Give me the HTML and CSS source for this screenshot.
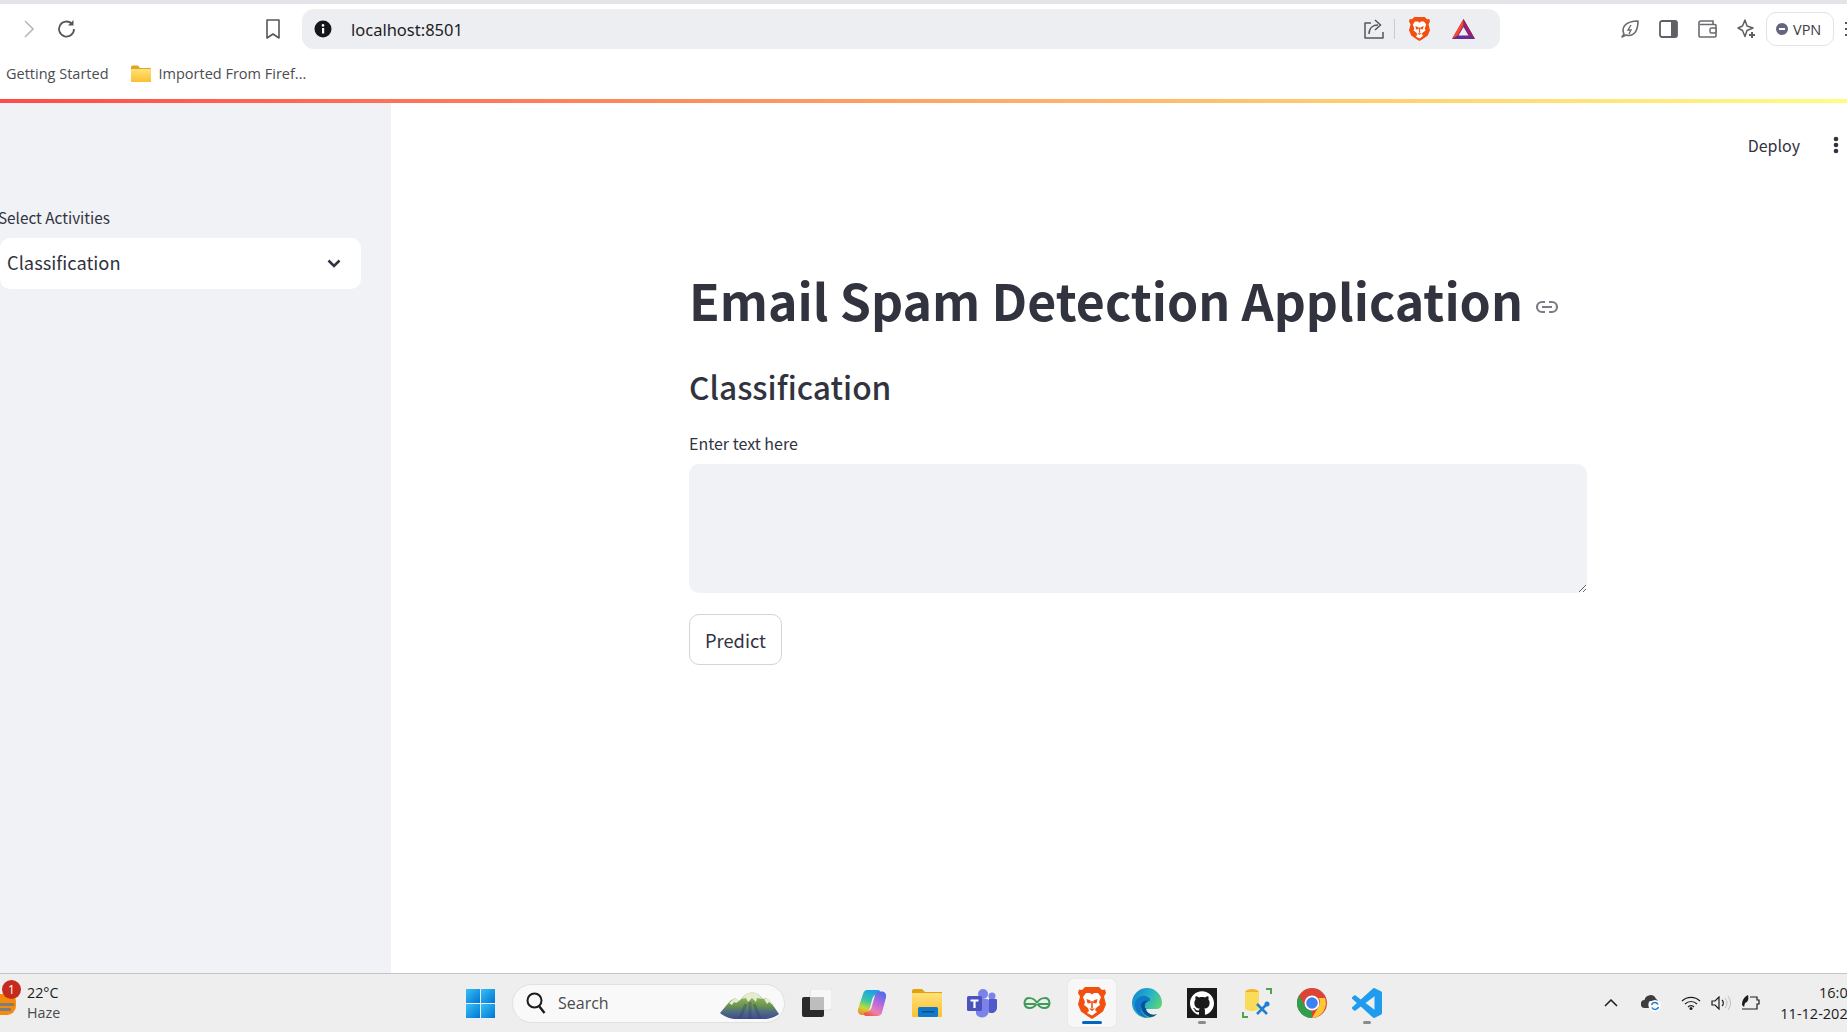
FILE: index.html
```html
<!DOCTYPE html>
<html lang="en">
<head>
<meta charset="utf-8">
<title>Email Spam Detection Application</title>
<link rel="stylesheet" href="styles.css">
</head>
<body>
<svg class="defs" width="0" height="0" aria-hidden="true">
  <defs>
    <symbol id="brave" viewBox="0 0 28 32">
      <path fill="#f1500f" d="M7 0h14l3 3 3-.5L28 6l-2 3.500 2 8-3 7-7 5-4 2.500-4-2.500-7-5-3-7 2-8L0 6l1-3.500L4 3z"/>
      <path fill="#fff" d="M8 6h4l2 1.500L16 6h4l3 4-2 5 1 3-4 3-1 2 2 2-5 3.500L9 26l2-2-1-3-4-3 1-3-2-5z"/>
      <path fill="#f1500f" d="M8.500 12l4 1.500.5 2.500-3.500.5zM19.500 12l-4 1.500-.5 2.500 3.500.5zM13.200 14h1.600v7h-1.600zM11 21.500h6L14 24z"/>
    </symbol>
    <linearGradient id="win" x1="0" y1="0" x2="1" y2="1"><stop offset="0" stop-color="#35c1f5"/><stop offset="1" stop-color="#0074d4"/></linearGradient>
    <linearGradient id="folder" x1="0" y1="0" x2="0" y2="1"><stop offset="0" stop-color="#ffe17a"/><stop offset="1" stop-color="#fbc02d"/></linearGradient>
    <linearGradient id="copilot" x1="0.6" y1="0" x2="0.3" y2="1"><stop offset="0" stop-color="#1a9fe8"/><stop offset=".45" stop-color="#3cc8a0"/><stop offset=".75" stop-color="#c8d838"/><stop offset="1" stop-color="#f08a30"/></linearGradient>
    <linearGradient id="copilot2" x1="0.7" y1="0" x2="0.2" y2="1"><stop offset="0" stop-color="#4f6ee8"/><stop offset=".4" stop-color="#b868e0"/><stop offset=".75" stop-color="#ee80b0"/><stop offset="1" stop-color="#f0583a"/></linearGradient>
    <linearGradient id="edge" x1="0" y1="0" x2="1" y2="0.6"><stop offset="0" stop-color="#0f7fd0"/><stop offset=".55" stop-color="#27b4c8"/><stop offset="1" stop-color="#62d86a"/></linearGradient>
    <linearGradient id="mount" x1="0" y1="0" x2="0" y2="1"><stop offset="0" stop-color="#a8c080"/><stop offset=".45" stop-color="#6f9a48"/><stop offset=".7" stop-color="#4f6f80"/><stop offset="1" stop-color="#3f4490"/></linearGradient>
  </defs>
</svg>

<div class="window">
  <div class="top-strip"></div>

  <header class="toolbar">
    <div class="nav-group">
      <svg class="ic-forward" width="10" height="18" viewBox="0 0 10 18"><path d="M1 1l8 8-8 8" fill="none" stroke="#b9b9bd" stroke-width="1.6"/></svg>
      <svg class="ic-reload" width="20" height="20" viewBox="0 0 20 20"><path d="M17 10a7.500 7.500 0 1 1-2.300-5.400" fill="none" stroke="#55565c" stroke-width="1.800"/><path d="M16.500 1v5.500h-5.500z" fill="#55565c"/></svg>
      <svg class="ic-bookmark" width="16" height="20" viewBox="0 0 16 20"><path d="M2 1h12v18l-6-4-6 4z" fill="none" stroke="#55565c" stroke-width="1.6" stroke-linejoin="round"/></svg>
    </div>
    <div class="addressbar">
      <svg class="ic-info" width="18" height="18" viewBox="0 0 18 18"><circle cx="9" cy="9" r="8.500" fill="#17171a"/><rect x="8" y="8" width="2.200" height="5.500" fill="#fff"/><circle cx="9" cy="5.400" r="1.300" fill="#fff"/></svg>
      <span class="url">localhost:8501</span>
      <svg class="ic-share" width="20" height="20" viewBox="0 0 20 20"><path d="M7 4H1v15h18v-6" fill="none" stroke="#55565c" stroke-width="1.500" stroke-linejoin="round"/><path d="M5 15c0-6 4-9 9-9M11 1l5.500 5-5.500 5" fill="none" stroke="#55565c" stroke-width="1.500"/></svg>
      <span class="addr-sep"></span>
      <svg class="ic-brave" width="21" height="24"><use href="#brave"/></svg>
      <svg class="ic-bat" width="23" height="20" viewBox="0 0 23 20"><path d="M11.500 0L23 20H0z" fill="#662d91"/><path d="M11.500 0L0 20l5.500-3.500L11.500 6z" fill="#ff4724"/><path d="M11.500 0v6l6 10.500L23 20z" fill="#9e1f63"/><path d="M11.500 8l5 8.500h-10z" fill="#eeeef2"/></svg>
    </div>
    <div class="ext-group">
      <svg width="18" height="18" viewBox="0 0 18 18"><path d="M1 17l2-3C0 8 4 1 17 1c0 12-6 16-12 14z" fill="none" stroke="#6a6b70" stroke-width="1.600" stroke-linejoin="round"/><path d="M10 5l-3 5h3l-2 4" fill="none" stroke="#6a6b70" stroke-width="1.400"/></svg>
      <svg width="19" height="18" viewBox="0 0 19 18"><rect x="1" y="1" width="17" height="16" rx="2" fill="#fff" stroke="#5f6066" stroke-width="1.800"/><rect x="12" y="1" width="6" height="16" fill="#5f6066"/></svg>
      <svg width="19" height="18" viewBox="0 0 19 18"><path d="M2 4.500h15a1 1 0 0 1 1 1V16a1 1 0 0 1-1 1H2a1 1 0 0 1-1-1V3a2 2 0 0 1 2-2h12v3.500" fill="none" stroke="#6a6b70" stroke-width="1.600"/><rect x="12" y="8" width="6" height="5" rx="1.500" fill="#fff" stroke="#6a6b70" stroke-width="1.500"/></svg>
      <svg width="19" height="20" viewBox="0 0 19 20"><path d="M8 1l2 6 6 2-6 2.500-2 6-2.500-6L1 9l4.500-2z" fill="none" stroke="#5f6066" stroke-width="1.500" stroke-linejoin="round"/><path d="M15 13v6M12 16h6" stroke="#5f6066" stroke-width="2"/></svg>
      <div class="vpn"><span class="vpn-dot"></span><span>VPN</span></div>
      <div class="menu-dashes"><i></i><i></i><i></i></div>
    </div>
  </header>

  <nav class="bookmarks">
    <span class="bm-first">Getting Started</span>
    <svg class="bm-folder" width="20" height="17" viewBox="0 0 20 17"><path d="M0 2a1.500 1.500 0 0 1 1.500-1.500H7L9 3h10a1 1 0 0 1 1 1v12a1 1 0 0 1-1 1H1a1 1 0 0 1-1-1z" fill="#e0a526"/><rect y="4" width="20" height="13" rx="1" fill="url(#folder)"/></svg>
    <span>Imported From Firef...</span>
  </nav>

  <div class="decoration"></div>

  <div class="app">
    <aside class="sidebar">
      <label class="side-label">Select Activities</label>
      <div class="select">
        <span>Classification</span>
        <svg width="14" height="9" viewBox="0 0 14 9"><path d="M1.500 1.500L7 7l5.500-5.500" fill="none" stroke="#31333f" stroke-width="2.600"/></svg>
      </div>
    </aside>
    <main class="content">
      <div class="app-header">
        <span class="deploy">Deploy</span>
        <svg class="kebab" width="6" height="18" viewBox="0 0 6 18"><circle cx="3" cy="3" r="2.300" fill="#31333f"/><circle cx="3" cy="9" r="2.300" fill="#31333f"/><circle cx="3" cy="15" r="2.300" fill="#31333f"/></svg>
      </div>
      <div class="block">
        <h1 class="title">Email Spam Detection Application
          <svg class="anchor" width="24" height="14" viewBox="0 0 24 14"><path d="M10 2H7a5 5 0 0 0 0 10h3M14 2h3a5 5 0 0 1 0 10h-3M7 7h10" fill="none" stroke="#7b7d86" stroke-width="2.200"/></svg>
        </h1>
        <h2 class="subtitle">Classification</h2>
        <label class="field-label" for="msg">Enter text here</label>
        <textarea class="textbox" id="msg"></textarea>
        <button class="predict" type="button">Predict</button>
      </div>
    </main>
  </div>

  <footer class="taskbar">
    <div class="weather">
      <div class="weather-icon">
        <svg width="16" height="22" viewBox="0 0 16 22"><path d="M0 0h12a4 9 0 0 1 4 9v3a9 9 0 0 1-9 9H0z" fill="#f58a0b"/><path d="M0 9h14v3H0zM0 14h11v3H0z" fill="#7d7d7d"/></svg>
        <span class="badge">1</span>
      </div>
      <div class="weather-text"><span class="temp">22°C</span><span class="cond">Haze</span></div>
    </div>

    <svg class="win" width="29" height="29" viewBox="0 0 29 29"><rect width="14" height="14" fill="url(#win)"/><rect x="15" width="14" height="14" fill="url(#win)"/><rect y="15" width="14" height="14" fill="url(#win)"/><rect x="15" y="15" width="14" height="14" fill="url(#win)"/></svg>

    <div class="search">
      <svg width="20" height="22" viewBox="0 0 20 22"><circle cx="8.500" cy="8.500" r="7" fill="none" stroke="#1c1c1c" stroke-width="2"/><path d="M13 14l5.500 7" stroke="#1c1c1c" stroke-width="2.400"/></svg>
      <span class="search-text">Search</span>
      <svg class="mount" width="60" height="27" viewBox="0 0 60 27">
        <path d="M0 21L10 9l5-3 4 3 7-7 6-2 6 2 5 5 3-1 4 3 9 13c-5 4-12 6-30 6S5 25 0 21z" fill="url(#mount)"/>
        <path d="M22 7l4-5 6-2 6 2 4 5-5-1-1 4-4-4-4 4-2-4zM9 11l6-5 4 3-3 2-2-1-2 3zM44 7l3-1 4 3 2 4-4-3-2 2z" fill="#e6ecd2"/>
        <path d="M20 26l6-14M40 26l-6-14M30 27V10" stroke="#2e3a78" stroke-width="3" opacity=".35"/>
      </svg>
    </div>

    <div class="apps">
      <div class="app-icon"><svg width="30" height="28" viewBox="0 0 30 28"><rect x="8" width="22" height="21" rx="2" fill="#f7f7f7"/><rect x="8" y="0" width="22" height="21" rx="2" fill="none" stroke="#e2e2e2"/><rect y="8" width="22" height="20" rx="2" fill="#2a2a2a"/><rect x="8" y="8" width="14" height="13" fill="#bdbdbd"/></svg></div>
      <div class="app-icon"><svg width="30" height="30" viewBox="0 0 30 30"><path d="M10 2h11c1.500 0 2.500 1 2 2.500l-1 1.500c-4 0-6 2-7 6l-3 11c-.5 2-2 4-5 4H4c-2.500-1-3.500-3-3-6L6 6c.5-2 2-4 4-4z" fill="url(#copilot)"/><path d="M20 28H9c-1.500 0-2.500-1-2-2.500l1-1.500c4 0 6-2 7-6l3-11c.5-2 2-3.500 5-3.500h3c2.500 1 3.500 3 3 6l-4 15c-.5 2-2 3.500-5 3.500z" fill="url(#copilot2)"/></svg></div>
      <div class="app-icon"><svg width="30" height="28" viewBox="0 0 30 28"><path d="M0 2a2 2 0 0 1 2-2h8l3 3h17v23H0z" fill="#e0a30f"/><rect y="4" width="30" height="24" rx="1" fill="url(#folder)"/><rect x="6" y="18" width="20" height="10" rx="1.500" fill="#0f78c8"/><rect x="10" y="22" width="12" height="1.500" fill="#0b4f8a"/></svg></div>
      <div class="app-icon"><svg width="30" height="29" viewBox="0 0 30 29"><circle cx="25" cy="7" r="3.500" fill="#7b83eb"/><circle cx="16" cy="5" r="5" fill="#7b83eb"/><path d="M9 10h11a2 2 0 0 1 2 2v10a7 7 0 0 1-13 3z" fill="#7b83eb"/><path d="M22 10h7a1 1 0 0 1 1 1v8a5.500 5.500 0 0 1-8 4.500z" fill="#5059c9"/><rect y="7" width="15" height="15" rx="1.500" fill="#4b53bc"/><path d="M3.500 10.500h8v2H8.600V19H6.400v-6.500H3.500z" fill="#fff"/></svg></div>
      <div class="app-icon"><svg width="28" height="14" viewBox="0 0 28 14"><path d="M1.500 8h11M15.500 8h11M14 7C11 1 2 0 1.500 7c0 6 8 7 12 1M14 7c3-6 12-7 12.500 0 0 6-8 7-12 1" fill="none" stroke="#3f9a58" stroke-width="2"/></svg></div>
      <div class="app-icon current"><svg width="28" height="32"><use href="#brave"/></svg></div>
      <div class="app-icon"><svg width="30" height="30" viewBox="0 0 30 30"><path d="M15 0A15 15 0 0 1 30 15c0 3-2 6-5 6H14c0 3 3 6 8 6l3-1c-3 3-6 4-10 4A15 15 0 0 1 15 0z" fill="url(#edge)"/><path d="M3 20C1 12 8 7 13 8c4 1 6 3 5 5-3-1-8 0-9 5s2 9 7 11.500C10 30 5 26 3 20z" fill="#0f78c8"/><path d="M9 18c0 5 4 10 9 11 3 0 5-1 7-3-5 2-11-1-11-6h-1c-1-5 2-7 5-7-5-1-9 0-9 5z" fill="#0b4f98"/></svg></div>
      <div class="app-icon running"><svg class="gh" width="30" height="30" viewBox="-3 -3 30 30"><rect x="-3" y="-3" width="30" height="30" fill="#1a1a1a"/><path fill="#fff" d="M12 .297c-6.630 0-12 5.373-12 12 0 5.303 3.438 9.800 8.205 11.385.6.113.82-.258.82-.577 0-.285-.01-1.040-.015-2.040-3.338.724-4.042-1.610-4.042-1.610C4.422 18.070 3.633 17.700 3.633 17.700c-1.087-.744.084-.729.084-.729 1.205.084 1.838 1.236 1.838 1.236 1.070 1.835 2.809 1.305 3.495.998.108-.776.417-1.305.76-1.605-2.665-.3-5.466-1.332-5.466-5.930 0-1.310.465-2.380 1.235-3.220-.135-.303-.54-1.523.105-3.176 0 0 1.005-.322 3.300 1.230.96-.267 1.980-.399 3-.405 1.020.006 2.040.138 3 .405 2.280-1.552 3.285-1.230 3.285-1.230.645 1.653.24 2.873.12 3.176.765.84 1.230 1.910 1.230 3.220 0 4.610-2.805 5.625-5.475 5.920.42.36.81 1.096.81 2.220 0 1.606-.015 2.896-.015 3.286 0 .315.21.69.825.57C20.565 22.092 24 17.592 24 12.297c0-6.627-5.373-12-12-12"/></svg></div>
      <div class="app-icon"><svg width="30" height="30" viewBox="0 0 30 30"><path d="M0 24v6h6v-2H2v-4zM24 0v2h4v4h2V0z" fill="#4ca64c"/><ellipse cx="10" cy="4" rx="7" ry="3" fill="#f0b429"/><path d="M3 4v16c0 2 3 3 7 3s7-1 7-3V4z" fill="#fbdc5a"/><path d="M15 16l10 10M25 16L15 26" stroke="#1f7fd0" stroke-width="2.500"/><circle cx="25" cy="16" r="2.500" fill="#1f7fd0"/></svg></div>
      <div class="app-icon"><svg width="30" height="30" viewBox="0 0 30 30"><circle cx="15" cy="15" r="15" fill="#db4437"/><path d="M15 30A15 15 0 0 1 2 7.500L9 19.500a7 7 0 0 0 6 3.500z" fill="#2f9e4f"/><path d="M15 30l7-12a7 7 0 0 0-.5-8H28A15 15 0 0 1 15 30z" fill="#fcc934"/><circle cx="15" cy="15" r="7.500" fill="#fff"/><circle cx="15" cy="15" r="5.800" fill="#3b82f0"/></svg></div>
      <div class="app-icon running"><svg width="30" height="30" viewBox="0 0 24 24"><path fill="#1f9cf0" d="M23.150 2.587L18.210.21a1.494 1.494 0 0 0-1.705.29l-9.460 8.630-4.120-3.128a.999.999 0 0 0-1.276.057L.327 7.261A1 1 0 0 0 .326 8.740L3.899 12 .326 15.260a1 1 0 0 0 .001 1.479L1.650 17.940a.999.999 0 0 0 1.276.057l4.120-3.128 9.460 8.630a1.492 1.492 0 0 0 1.704.29l4.942-2.377A1.500 1.500 0 0 0 24 20.060V3.939a1.500 1.500 0 0 0-.85-1.352zm-5.146 14.861L10.826 12l7.178-5.448v10.896z"/></svg></div>
    </div>

    <div class="tray">
      <svg width="14" height="8" viewBox="0 0 14 8"><path d="M1 7l6-6 6 6" fill="none" stroke="#1c1c1c" stroke-width="1.500"/></svg>
      <svg class="tray-cloud" width="20" height="18" viewBox="0 0 20 18"><path d="M4 14a4 4 0 0 1-.5-8A6 6 0 0 1 15 5a4 4 0 0 1 2 2H9c-2 1-2 5-1 7z" fill="#3d3d3d"/><circle cx="14" cy="12" r="6" fill="#fff"/><path d="M10.500 11a3.500 3.500 0 0 1 6.500-.5M17.500 13a3.500 3.500 0 0 1-6.500.5" fill="none" stroke="#1f7fd0" stroke-width="1.600"/></svg>
      <svg width="20" height="14" viewBox="0 0 20 14"><path d="M1 5a13 13 0 0 1 18 0M4 8a8.500 8.500 0 0 1 12 0M7 11a4 4 0 0 1 6 0" fill="none" stroke="#1c1c1c" stroke-width="1.200"/><circle cx="10" cy="12.500" r="1.500" fill="#1c1c1c"/></svg>
      <svg width="20" height="14" viewBox="0 0 20 14"><path d="M1 5h3l4-4v12l-4-4H1z" fill="none" stroke="#1c1c1c" stroke-width="1.200"/><path d="M11 4a4 4 0 0 1 0 6" fill="none" stroke="#1c1c1c" stroke-width="1.200"/><path d="M14 2a8 8 0 0 1 0 10M17 0a11 11 0 0 1 0 14" fill="none" stroke="#bdbdbd" stroke-width="1"/></svg>
      <svg width="20" height="16" viewBox="0 0 20 16"><path d="M9 2h7v3h2v4h-2v5H1" fill="none" stroke="#1c1c1c" stroke-width="1.200"/><path d="M1 10C1 5 3 2 7 0c1 4 0 7-3 8l-1 4z" fill="#1c1c1c"/></svg>
      <div class="clock"><span>16:00</span><span>11-12-2023</span></div>
    </div>
  </footer>
</div>
</body>
</html>
```

FILE: styles.css
```css
* { box-sizing: border-box; }
html, body { margin: 0; padding: 0; width: 1847px; height: 1032px; overflow: hidden; background: #fff; }
.defs { position: absolute; }
svg { display: block; flex: none; }

.window {
  display: flex;
  flex-direction: column;
  width: 1847px;
  height: 1032px;
  overflow: hidden;
  font-family: "Noto Sans CJK SC", "Noto Sans", sans-serif;
  color: #31333f;
}

.top-strip { height: 4px; background: #e3e3e8; flex: none; }

/* browser chrome */
.toolbar {
  height: 50px;
  flex: none;
  display: flex;
  align-items: center;
  font-family: "Open Sans", "Noto Sans", sans-serif;
}
.nav-group { display: flex; align-items: center; width: 302px; flex: none; padding-left: 24px; }
.ic-reload { margin-left: 23px; }
.ic-bookmark { margin-left: 188px; }
.addressbar {
  width: 1198px;
  height: 40px;
  flex: none;
  background: #edeef2;
  border-radius: 12px;
  display: flex;
  align-items: center;
  padding-left: 12px;
}
.url { margin-left: 19px; font-size: 16.500px; color: #1d1d22; font-family: "Noto Sans", sans-serif; flex: 1; }
.addr-sep { width: 1px; height: 20px; background: #c9c9ce; margin-left: 10px; }
.ic-brave { margin-left: 14px; }
.ic-bat { margin-left: 22px; margin-right: 25px; }
.ext-group { display: flex; align-items: center; flex: none; padding-left: 121px; gap: 20px; }
.vpn {
  width: 68px;
  height: 34px;
  margin-left: -10px;
  flex: none;
  border: 1.500px solid #e3e3e8;
  border-radius: 10px;
  display: flex;
  align-items: center;
  gap: 5px;
  padding-left: 9px;
  font-size: 14.500px;
  color: #3c3c44;
}
.vpn-dot { width: 12px; height: 12px; border-radius: 50%; background: #63667e; position: relative; }
.vpn-dot::after { content: ""; position: absolute; left: 3px; right: 3px; top: 5px; height: 2px; background: #fff; }
.menu-dashes { display: flex; flex-direction: column; gap: 4px; margin-left: -9px; }
.menu-dashes i { display: block; width: 5px; height: 2px; background: #55565c; }

.bookmarks {
  height: 45px;
  flex: none;
  display: flex;
  align-items: center;
  padding: 0 0 7px 6px;
  font-family: "Open Sans", "Noto Sans", sans-serif;
  font-size: 14.500px;
  color: #4c4c52;
}
.bm-folder { margin-left: 22px; margin-right: 8px; }

.decoration {
  height: 4px;
  flex: none;
  background: linear-gradient(90deg, #ff4b4b, #fffd80);
}

/* streamlit app */
.app { flex: 1; display: flex; min-height: 0; }
.sidebar { width: 391px; flex: none; background: #f0f2f6; padding-top: 102px; }
.side-label { display: block; margin-left: -2px; font-size: 15.300px; line-height: 24px; color: #31333f; }
.select {
  width: 361px;
  height: 51px;
  margin-top: 9px;
  background: #fff;
  border-radius: 10px;
  display: flex;
  align-items: center;
  justify-content: space-between;
  padding: 0 20px 3px 7px;
  font-size: 18.300px;
}
.select svg { margin-top: 3px; }
.content { flex: 1; padding-left: 298px; min-width: 0; }
.app-header {
  display: flex;
  align-items: center;
  height: 84px;
  padding-right: 8px;
  justify-content: flex-end;
  gap: 33px;
  font-size: 16px;
}
.block { width: 898px; display: flex; flex-direction: column; align-items: flex-start; padding-top: 76px; }
.title { margin: 0; display: flex; align-items: center; gap: 12px; font-size: 50px; line-height: 72px; font-weight: 700; white-space: nowrap; color: #31333f; }
.anchor { margin-top: 15px; }
.subtitle { margin: 28px 0 0; font-size: 31.700px; line-height: 46px; font-weight: 500; color: #31333f; }
.field-label { display: block; margin-top: 22px; font-size: 16px; line-height: 24px; color: #31333f; }
.textbox {
  display: block;
  width: 898px;
  height: 129px;
  margin-top: 9px;
  background: #f0f2f6;
  border: 0;
  border-radius: 10px;
  resize: vertical;
  outline: none;
  font: inherit;
}
.predict {
  width: 93px;
  height: 51px;
  margin-top: 21px;
  background: #fff;
  border: 1px solid #d3d4d8;
  border-radius: 10px;
  font-family: inherit;
  font-size: 18.300px;
  color: #31333f;
  padding: 0;
}

/* taskbar */
.taskbar {
  height: 59px;
  flex: none;
  display: flex;
  align-items: center;
  background: #eeeeee;
  border-top: 1px solid #c4c4c4;
  font-family: "Open Sans", "Noto Sans", sans-serif;
  color: #1c1c1c;
}
.weather { width: 466px; flex: none; display: flex; align-items: center; gap: 11px; }
.weather-icon { position: relative; width: 16px; height: 22px; margin-top: 4px; }
.badge {
  position: absolute;
  left: 2px;
  top: -14px;
  width: 19px;
  height: 19px;
  border-radius: 50%;
  background: #c42b1c;
  color: #fff;
  font-size: 12px;
  line-height: 19px;
  text-align: center;
}
.weather-text { display: flex; flex-direction: column; font-size: 14.300px; line-height: 20px; }
.cond { color: #4a4a4a; }
.win { margin-top: 1px; }
.search {
  width: 273px;
  height: 39px;
  margin-left: 17px;
  flex: none;
  background: #f9f9f9;
  border: 1px solid #e0e0e0;
  border-radius: 20px;
  display: flex;
  align-items: center;
  padding-left: 13px;
  font-size: 16px;
  color: #4a4a4a;
}
.search-text { margin-left: 12px; flex: 1; }
.mount { margin-right: 4px; margin-top: 5px; }
.apps { display: flex; align-items: center; gap: 25px; margin-left: 17px; flex: none; }
.app-icon { position: relative; width: 30px; height: 32px; display: flex; align-items: center; justify-content: center; }
.app-icon.current::before {
  content: "";
  position: absolute;
  left: -9px;
  right: -9px;
  top: -8px;
  bottom: -8px;
  background: #f7f7f7;
  border-radius: 5px;
  box-shadow: 0 0 1px #c8c8c8;
}
.app-icon.current svg { position: relative; }
.app-icon.current::after {
  content: "";
  position: absolute;
  left: 5px;
  width: 20px;
  bottom: -5px;
  height: 3px;
  border-radius: 2px;
  background: #0067c0;
}
.app-icon.running::after {
  content: "";
  position: absolute;
  left: 11px;
  width: 8px;
  bottom: -5px;
  height: 3px;
  border-radius: 2px;
  background: #8a8a8a;
}
.tray { display: flex; align-items: center; margin-left: 222px; gap: 20px; flex: none; }
.tray-cloud { margin-left: 3px; }
.tray svg:nth-child(4) { margin-left: -10px; }
.tray svg:nth-child(5) { margin-left: -10px; }
.clock {
  display: flex;
  flex-direction: column;
  align-items: flex-end;
  width: 78px;
  margin-left: -3px;
  font-size: 14.500px;
  line-height: 21px;
}
```
